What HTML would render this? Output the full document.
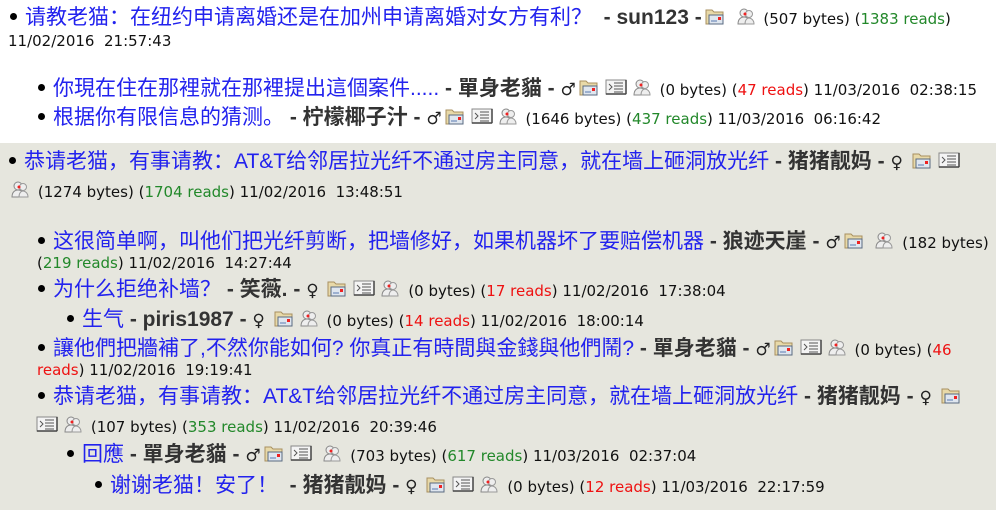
<!DOCTYPE html>
<html><head><meta charset="utf-8"><style>
body{margin:0;width:1000px;height:510px;background:#fff;position:relative;overflow:hidden;font-family:"Liberation Sans","Noto Sans CJK SC",sans-serif;}
.g{position:absolute;left:0;top:143px;width:996px;height:367px;background:#e6e6de;}
.l{position:absolute;white-space:nowrap;height:26px;line-height:26px;font-size:21px;color:#333;}
.l b.bl{display:inline-block;width:7px;height:7px;border-radius:50%;background:#000;vertical-align:middle;margin-right:8px;position:relative;top:-2px}
.t{color:#2222ee}
.a{color:#333;font-weight:bold}
.s{font-size:17px;color:#222;font-family:"DejaVu Sans",sans-serif;font-weight:normal}
.m{font-size:15px;color:#111;font-family:"DejaVu Sans","Liberation Sans",sans-serif;}
.gr{color:#22882a}.rd{color:#ee1111}
svg{vertical-align:middle;position:relative;top:-2px;margin:0 3px}
</style></head><body>
<div class="g"></div>
<svg width="0" height="0" style="position:absolute"><defs>
<symbol id="f" viewBox="0 0 20 18"><path d="M1 3h6l2 2h9v12H1z" fill="#e8d9a8" stroke="#a89060"/><rect x="4" y="8" width="14" height="9" fill="#dfe6ef" stroke="#5a6a80"/><rect x="13" y="10" width="3" height="3" fill="#e22"/><path d="M6 14h6" stroke="#5a7ab0"/></symbol>
<symbol id="d" viewBox="0 0 22 18"><rect x="1" y="2" width="20" height="14" fill="#f4f4f4" stroke="#888"/><path d="M1 16h20M21 2v14" stroke="#444" stroke-width="1.5"/><path d="M4 6l3 3-3 3M9 5h9M9 8h9M9 11h9M9 14h9" stroke="#555" fill="none"/></symbol>
<symbol id="p" viewBox="0 0 18 18"><circle cx="7" cy="6" r="4" fill="#eee" stroke="#888"/><path d="M1 17c0-5 3-7 6-7s6 2 6 7z" fill="#eee" stroke="#888"/><circle cx="12" cy="7" r="3.5" fill="#eee" stroke="#999"/><path d="M8 17c0-4 2-6 4-6s5 2 5 6z" fill="#eee" stroke="#999"/><circle cx="8" cy="7" r="1.5" fill="#e22"/></symbol>
</defs></svg>

<div class="l" style="left:10px;top:5px"><b class="bl"></b><span class="t">请教老猫：在纽约申请离婚还是在加州申请离婚对女方有利？</span> &nbsp;<span class="a">- sun123 -</span><svg width="20" height="18"><use href="#f"/></svg> <svg width="18" height="18"><use href="#p"/></svg> <span class="m">(507 bytes) (<span class="gr">1383 reads</span>)</span></div>
<div class="l m" style="left:8px;top:28px">11/02/2016&nbsp; 21:57:43</div>

<div class="l" style="left:38px;top:76px"><b class="bl"></b><span class="t">你現在住在那裡就在那裡提出這個案件.....</span> <span class="a">- 單身老貓 -</span> <span class="s">♂</span><svg width="20" height="18"><use href="#f"/></svg><svg width="22" height="18"><use href="#d"/></svg><svg width="18" height="18"><use href="#p"/></svg> <span class="m">(0 bytes) (<span class="rd">47 reads</span>) 11/03/2016&nbsp; 02:38:15</span></div>
<div class="l" style="left:38px;top:105px"><b class="bl"></b><span class="t">根据你有限信息的猜测。</span> <span class="a">- 柠檬椰子汁 -</span> <span class="s">♂</span><svg width="20" height="18"><use href="#f"/></svg><svg width="22" height="18"><use href="#d"/></svg><svg width="18" height="18"><use href="#p"/></svg> <span class="m">(1646 bytes) (<span class="gr">437 reads</span>) 11/03/2016&nbsp; 06:16:42</span></div>

<div class="l" style="left:9px;top:149px"><b class="bl"></b><span class="t">恭请老猫，有事请教：AT&amp;T给邻居拉光纤不通过房主同意，就在墙上砸洞放光纤</span> <span class="a">- 猪猪靓妈 -</span> <span class="s">♀</span> <svg width="20" height="18"><use href="#f"/></svg><svg width="22" height="18"><use href="#d"/></svg></div>
<div class="l" style="left:8px;top:178px"><svg width="18" height="18"><use href="#p"/></svg> <span class="m">(1274 bytes) (<span class="gr">1704 reads</span>) 11/02/2016&nbsp; 13:48:51</span></div>

<div class="l" style="left:38px;top:229px"><b class="bl"></b><span class="t">这很简单啊，叫他们把光纤剪断，把墙修好，如果机器坏了要赔偿机器</span> <span class="a">- 狼迹天崖 -</span> <span class="s">♂</span><svg width="20" height="18"><use href="#f"/></svg> <svg width="18" height="18"><use href="#p"/></svg> <span class="m">(182 bytes)</span></div>
<div class="l m" style="left:37px;top:250px">(<span class="gr">219 reads</span>) 11/02/2016&nbsp; 14:27:44</div>
<div class="l" style="left:38px;top:277px"><b class="bl"></b><span class="t">为什么拒绝补墙？</span> <span class="a">- 笑薇. -</span> <span class="s">♀</span> <svg width="20" height="18"><use href="#f"/></svg><svg width="22" height="18"><use href="#d"/></svg><svg width="18" height="18"><use href="#p"/></svg> <span class="m">(0 bytes) (<span class="rd">17 reads</span>) 11/02/2016&nbsp; 17:38:04</span></div>
<div class="l" style="left:67px;top:307px"><b class="bl"></b><span class="t">生气</span> <span class="a">- piris1987 - </span><span class="s">♀</span> <svg width="20" height="18"><use href="#f"/></svg><svg width="18" height="18"><use href="#p"/></svg> <span class="m">(0 bytes) (<span class="rd">14 reads</span>) 11/02/2016&nbsp; 18:00:14</span></div>
<div class="l" style="left:38px;top:336px"><b class="bl"></b><span class="t">讓他們把牆補了,不然你能如何? 你真正有時間與金錢與他們鬧?</span> <span class="a">- 單身老貓 -</span> <span class="s">♂</span><svg width="20" height="18"><use href="#f"/></svg><svg width="22" height="18"><use href="#d"/></svg><svg width="18" height="18"><use href="#p"/></svg> <span class="m">(0 bytes) (<span class="rd">46</span></span></div>
<div class="l m" style="left:37px;top:357px"><span class="rd">reads</span>) 11/02/2016&nbsp; 19:19:41</div>
<div class="l" style="left:38px;top:384px"><b class="bl"></b><span class="t">恭请老猫，有事请教：AT&amp;T给邻居拉光纤不通过房主同意，就在墙上砸洞放光纤</span> <span class="a">- 猪猪靓妈 -</span> <span class="s">♀</span> <svg width="20" height="18"><use href="#f"/></svg></div>
<div class="l" style="left:33px;top:413px"><svg width="22" height="18"><use href="#d"/></svg><svg width="18" height="18"><use href="#p"/></svg> <span class="m">(107 bytes) (<span class="gr">353 reads</span>) 11/02/2016&nbsp; 20:39:46</span></div>
<div class="l" style="left:67px;top:442px"><b class="bl"></b><span class="t">回應</span> <span class="a">- 單身老貓 -</span> <span class="s">♂</span><svg width="20" height="18"><use href="#f"/></svg><svg width="22" height="18"><use href="#d"/></svg> <svg width="18" height="18"><use href="#p"/></svg> <span class="m">(703 bytes) (<span class="gr">617 reads</span>) 11/03/2016&nbsp; 02:37:04</span></div>
<div class="l" style="left:95px;top:473px"><b class="bl"></b><span class="t">谢谢老猫！安了！</span> &nbsp;<span class="a">- 猪猪靓妈 -</span> <span class="s">♀</span> <svg width="20" height="18"><use href="#f"/></svg><svg width="22" height="18"><use href="#d"/></svg><svg width="18" height="18"><use href="#p"/></svg> <span class="m">(0 bytes) (<span class="rd">12 reads</span>) 11/03/2016&nbsp; 22:17:59</span></div>
</body></html>
